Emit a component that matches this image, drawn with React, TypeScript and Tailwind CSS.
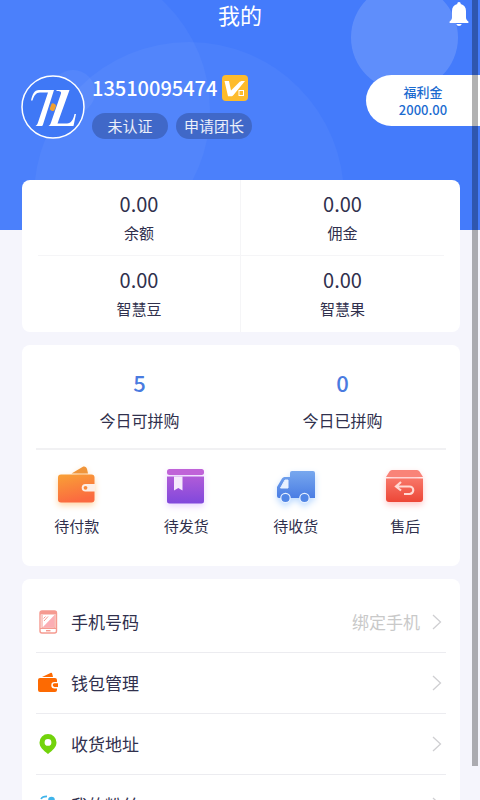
import React from 'react';

const stats = [
  { label: '余额', value: '0.00' },
  { label: '佣金', value: '0.00' },
  { label: '智慧豆', value: '0.00' },
  { label: '智慧果', value: '0.00' },
];

const groupBuys = [
  { label: '今日可拼购', value: 5 },
  { label: '今日已拼购', value: 0 },
];

const orders = [
  { label: '待付款', icon: <WalletIcon /> },
  { label: '待发货', icon: <BoxIcon /> },
  { label: '待收货', icon: <TruckIcon /> },
  { label: '售后', icon: <RefundIcon /> },
];

const menu = [
  { label: '手机号码', hint: '绑定手机', icon: <PhoneIcon /> },
  { label: '钱包管理', icon: <SmallWalletIcon /> },
  { label: '收货地址', icon: <PinIcon /> },
  { label: '我的粉丝', icon: <FansIcon /> },
];

function BellIcon() {
  return (
    <svg width="20" height="24" viewBox="0 0 20 24" fill="#fff">
      <path d="M10 0a1.700 1.700 0 0 1 1.700 1.900C15.200 2.600 17 5.300 17 9v6.500c0 1.900 1 2.900 2.400 3.900V21H.6v-1.600C2 18.400 3 17.400 3 15.500V9c0-3.700 1.800-6.400 5.300-7.100A1.700 1.700 0 0 1 10 0z" />
      <path d="M7.300 22h5.400c-.4 1.300-1.400 2-2.700 2s-2.300-.7-2.700-2z" />
    </svg>
  );
}

function Logo() {
  return (
    <svg width="64" height="64" viewBox="0 0 64 64" fill="none">
      <circle cx="32" cy="32" r="31" fill="#3f78f6" stroke="#fff" strokeWidth="1.500" />
      <path d="M10 25.500c1.500-6 3-10.500 8-10.500h15L22 49.500c-.3 1-.8 1.500-1.800 1.500h-5.700c1.500-1 2-2 2.500-3.500L27 17.500h-8c-4 0-6 3-7.500 8z" fill="#fff" />
      <path d="M35.500 15h13L36.500 48.500H46c4 0 6.500-4 7.500-9.500h1.500L52.500 51H27.500c1.500-1 2-2 2.500-3.500L40 18.500c.6-2-1.500-2.500-4.500-2.500z" fill="#fff" />
      <rect x="29.500" y="28.500" width="5" height="7.500" rx="2" transform="rotate(20 32 32)" fill="#f0a030" />
    </svg>
  );
}

function VipBadge() {
  return (
    <svg width="26" height="26" viewBox="0 0 26 26" fill="none">
      <rect width="26" height="26" rx="4" fill="#fdbb2c" />
      <path d="M2.500 6H7l2 9.500L17 7.500c1-1 2-1.500 3.500-1.500H23L11.500 20c-.7.900-1.200 1.300-2.300 1.300H6z" fill="#fff" />
      <rect x="17" y="15.500" width="4.500" height="5" fill="#fdbb2c" stroke="#fff" />
    </svg>
  );
}

function WalletIcon() {
  return (
    <svg width="40" height="40" viewBox="0 0 40 40" className="drop-shadow-md drop-shadow-orange-200">
      <defs>
        <linearGradient id="wallet" x1="0" y1="0" x2="0.300" y2="1">
          <stop stopColor="#f9a136" />
          <stop offset="1" stopColor="#fb6a40" />
        </linearGradient>
      </defs>
      <path d="M14.500 7.500 25.500 1c2-1 4 0 4.500 2l1 4.500z" fill="#f0953a" />
      <rect x="1" y="8.500" width="36.500" height="28" rx="3" fill="url(#wallet)" />
      <path d="M38 18H28.500a3.800 3.800 0 0 0 0 7.600H38z" fill="#fdeee6" />
      <circle cx="28.500" cy="21.800" r="1.900" fill="#f98b3b" />
    </svg>
  );
}

function BoxIcon() {
  return (
    <svg width="40" height="40" viewBox="0 0 40 40" className="drop-shadow-md drop-shadow-purple-200">
      <defs>
        <linearGradient id="box" x1="0" y1="0" x2="0" y2="1">
          <stop stopColor="#b05bd8" />
          <stop offset="1" stopColor="#8048dc" />
        </linearGradient>
      </defs>
      <rect x="1" y="3" width="37" height="6" rx="2.500" fill="#c063d8" />
      <path d="M1 10.500h37V35a2.500 2.500 0 0 1-2.500 2.500h-32A2.500 2.500 0 0 1 1 35z" fill="url(#box)" />
      <path d="M8 10.500h8.500v14l-4.200-2.500L8 24.500z" fill="#f5eafc" />
    </svg>
  );
}

function TruckIcon() {
  return (
    <svg width="40" height="40" viewBox="0 0 40 40" className="drop-shadow-md drop-shadow-blue-200">
      <defs>
        <linearGradient id="truck" x1="0" y1="0" x2="0" y2="1">
          <stop stopColor="#78a8ee" />
          <stop offset="1" stopColor="#4a7de4" />
        </linearGradient>
      </defs>
      <path d="M16 5h21a2 2 0 0 1 2 2v25H3a2 2 0 0 1-2-2V21l5-8.500a3 3 0 0 1 2.500-1.500H14V7a2 2 0 0 1 2-2z" fill="url(#truck)" />
      <path d="M9 14h3v8H4.500z" fill="#e8f1ff" stroke="#e8f1ff" strokeLinejoin="round" />
      <circle cx="9.500" cy="32" r="4.700" fill="#5186e6" stroke="#e8f1ff" strokeWidth="1.200" />
      <circle cx="28.500" cy="32" r="4.700" fill="#5186e6" stroke="#e8f1ff" strokeWidth="1.200" />
    </svg>
  );
}

function RefundIcon() {
  return (
    <svg width="40" height="40" viewBox="0 0 40 40" className="drop-shadow-md drop-shadow-red-200">
      <defs>
        <linearGradient id="refund" x1="0" y1="0" x2="0" y2="1">
          <stop stopColor="#f87668" />
          <stop offset="1" stopColor="#ec4737" />
        </linearGradient>
      </defs>
      <path d="M7 4h25a3 3 0 0 1 2.500 1.500L38 11H1l3.500-5.500A3 3 0 0 1 7 4z" fill="#f98378" />
      <path d="M1 12.500h37V33a3 3 0 0 1-3 3H4a3 3 0 0 1-3-3z" fill="url(#refund)" />
      <path d="m16 16-5 4.500 5 4M12 20.500h12.500a3.500 3.500 0 0 1 0 7.500H19" fill="none" stroke="#ffd9d3" strokeWidth="2.200" />
    </svg>
  );
}

function PhoneIcon() {
  return (
    <svg width="24" height="24" viewBox="0 0 24 24">
      <rect x="4" y="1" width="16.500" height="22" rx="2" fill="#fff" stroke="#f59a90" strokeWidth="1.400" />
      <path d="M4 3a2 2 0 0 1 2-2h12.500a2 2 0 0 1 2 2v1.500H4z" fill="#f59a90" />
      <path d="M18.500 5v12.500h-12z" fill="#fbaeb4" />
      <path d="M6 5v13h13V5M4 18.500h17M7.500 8.500l2-2M8 11l4-4.500" fill="none" stroke="#f59a90" strokeWidth="1" />
      <path d="M10 20.700h4.500" stroke="#f59a90" strokeWidth="1.400" />
    </svg>
  );
}

function SmallWalletIcon() {
  return (
    <svg width="24" height="24" viewBox="0 0 24 24" fill="#fd6a02">
      <path d="M6 6 14.500 2c1-.5 1.600 0 1.800 1l.7 3z" />
      <path d="M4 7h15a2 2 0 0 1 2 2v2h-2.500a3.200 3.200 0 0 0 0 6.400H21V19a2 2 0 0 1-2 2H4a2 2 0 0 1-2-2V9a2 2 0 0 1 2-2z" />
      <path d="M18.500 12.300h3.500v3.600h-3.500a1.800 1.800 0 0 1 0-3.600z" />
    </svg>
  );
}

function PinIcon() {
  return (
    <svg width="24" height="24" viewBox="0 0 24 24" fill="#72d30b">
      <path fillRule="evenodd" d="M12 2a8.500 8.500 0 0 1 8.500 8.500c0 4.500-3.500 7.500-8.500 11.500-5-4-8.500-7-8.500-11.500A8.500 8.500 0 0 1 12 2zm0 5a3.400 3.400 0 1 0 0 6.800A3.400 3.400 0 0 0 12 7z" />
    </svg>
  );
}

function FansIcon() {
  return (
    <svg width="24" height="24" viewBox="0 0 24 24" fill="none">
      <circle cx="15.500" cy="7" r="3.300" fill="#3fb4ea" />
      <path d="M5 6c1-2 3-2.600 6-2.600M9.500 20c0-5 2.500-8 6-8s6 3 6 8z" stroke="#3fb4ea" strokeWidth="1.600" />
    </svg>
  );
}

function Chevron() {
  return (
    <svg width="10" height="16" viewBox="0 0 10 16" fill="none" stroke="#cfcfd2" strokeWidth="1.300">
      <path d="m1 1 7.500 7L1 15" />
    </svg>
  );
}

function Header() {
  return (
    <header className="relative h-[230px] overflow-hidden bg-[#447bfb] text-white">
      <div className="absolute top-[42px] left-[34px] size-[310px] rounded-full bg-white/4" />
      <div className="absolute -top-10 -left-[90px] size-[300px] rounded-full bg-white/4" />
      <div className="absolute top-[70px] left-[51px] size-11 rounded-full bg-white/5" />
      <div className="absolute -top-4 right-[22px] size-[107px] rounded-full bg-white/15" />

      <div className="relative flex h-7 items-center justify-center">
        <h1 className="text-[22px] leading-7">我的</h1>
        <button type="button" aria-label="消息" className="absolute top-[2px] right-[11px]">
          <BellIcon />
        </button>
      </div>

      <div className="relative mt-[47px] flex items-start pl-[21px]">
        <Logo />
        <div className="ml-[7px]">
          <div className="flex items-center gap-[5px]">
            <span className="text-xl leading-[26px] font-medium">13510095474</span>
            <VipBadge />
          </div>
          <div className="mt-3 flex gap-2">
            <button type="button" className="h-[26px] w-[76px] rounded-full bg-[#4068c8] text-[15px] leading-[26px] text-white/90">
              未认证
            </button>
            <button type="button" className="h-[26px] w-[76px] rounded-full bg-[#4068c8] text-[15px] leading-[26px] text-white/90">
              申请团长
            </button>
          </div>
        </div>
        <div className="ml-auto flex h-[51px] w-[114px] flex-col items-center justify-center rounded-l-full bg-white text-[13px] leading-[18px] font-medium text-[#1b6bd0]">
          <span>福利金</span>
          <span>2000.00</span>
        </div>
      </div>
    </header>
  );
}

export default function App() {
  return (
    <div className="relative h-screen overflow-hidden bg-[#f5f5fc] font-['Noto_Sans_CJK_SC',sans-serif] text-[#30304d]">
      <Header />

      <main className="relative -mt-[50px] mr-5 ml-[22px] flex flex-col gap-[13px]">
        <section className="grid grid-cols-2 rounded-lg bg-white px-4">
          {stats.map((item, i) => (
            <div
              key={item.label}
              className={`flex h-[76px] flex-col items-center pt-[10px] ${i % 2 === 0 ? 'border-r border-[#f5f5f7]' : ''} ${i < 2 ? 'border-b border-b-[#f5f5f7]' : ''}`}
            >
              <span className="text-xl leading-7">{item.value}</span>
              <span className="mt-[3px] text-[15px] leading-6">{item.label}</span>
            </div>
          ))}
        </section>

        <section className="rounded-lg bg-white">
          <div className="mx-[14px] grid grid-cols-2 border-b-2 border-[#f1f1f3] px-[2px] pt-[21px] pb-4">
            {groupBuys.map((item) => (
              <div key={item.label} className="flex flex-col items-center">
                <span className="text-[22px] leading-8 font-medium text-[#4a7be0]">{item.value}</span>
                <span className="mt-[10px] text-base leading-6">{item.label}</span>
              </div>
            ))}
          </div>
          <div className="grid grid-cols-4 pt-4 pb-7">
            {orders.map((item) => (
              <button key={item.label} type="button" className="flex flex-col items-center gap-2 text-[15px] leading-6">
                {item.icon}
                {item.label}
              </button>
            ))}
          </div>
        </section>

        <section className="rounded-lg bg-white px-[14px] pt-[13px]">
          {menu.map((item) => (
            <a key={item.label} href="#" className="flex h-[61px] items-center border-b border-[#ececf0] text-[17px]">
              {item.icon}
              <span className="ml-[11px]">{item.label}</span>
              <span className="mr-3 ml-auto text-[#c9c9c9]">{item.hint}</span>
              <span className="mr-1">
                <Chevron />
              </span>
            </a>
          ))}
        </section>
      </main>

      {/* scroll indicator */}
      <div className="absolute top-0 right-[2px] h-[766px] w-[6px] bg-black/30" />
    </div>
  );
}
